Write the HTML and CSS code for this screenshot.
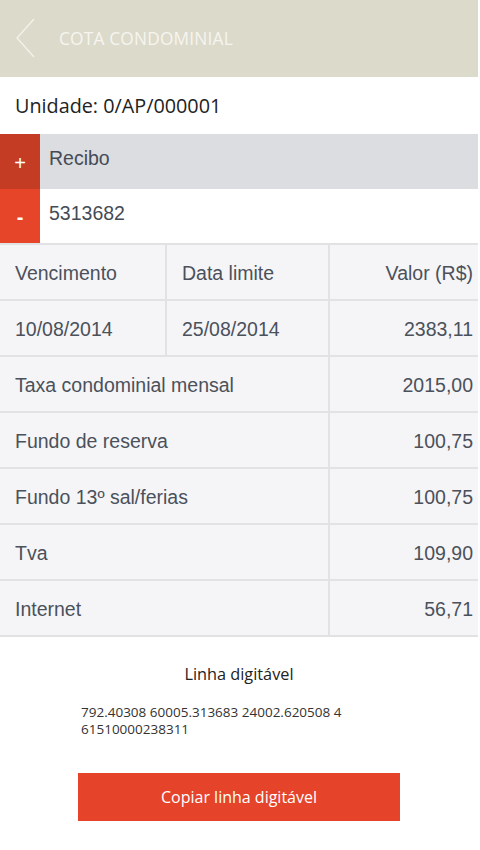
FILE: index.html
```html
<!DOCTYPE html>
<html lang="pt">
<head>
    <meta charset="UTF-8">
    <meta name="viewport" content="width=device-width, initial-scale=1.0">
    <title>Cota condominial</title>
    <link rel="stylesheet" href="styles.css">
</head>
<body>

    <header class="topbar">
        <a class="back" href="#">
            <svg width="22" height="42" viewBox="0 0 22 42">
                <polyline points="19,2 2,21 19,40" fill="none" stroke="#f3f2ea" stroke-width="1.4"/>
            </svg>
        </a>
        <h1>COTA CONDOMINIAL</h1>
    </header>

    <div class="unidade">Unidade: 0/AP/000001</div>

    <div class="recibo">
        <div class="recibo-row head">
            <span class="toggle plus">+</span>
            <span class="label">Recibo</span>
        </div>
        <div class="recibo-row">
            <span class="toggle minus">-</span>
            <span class="label">5313682</span>
        </div>
    </div>

    <div class="tabela">
        <div class="cell">Vencimento</div>
        <div class="cell">Data limite</div>
        <div class="cell num">Valor (R$)</div>

        <div class="cell">10/08/2014</div>
        <div class="cell">25/08/2014</div>
        <div class="cell num">2383,11</div>

        <div class="cell wide">Taxa condominial mensal</div>
        <div class="cell num">2015,00</div>

        <div class="cell wide">Fundo de reserva</div>
        <div class="cell num">100,75</div>

        <div class="cell wide">Fundo 13º sal/ferias</div>
        <div class="cell num">100,75</div>

        <div class="cell wide">Tva</div>
        <div class="cell num">109,90</div>

        <div class="cell wide">Internet</div>
        <div class="cell num">56,71</div>
    </div>

    <div class="linha">
        <h2>Linha digitável</h2>
        <p class="codigo">792.40308 60005.313683 24002.620508 4<br>61510000238311</p>
        <button class="copiar">Copiar linha digitável</button>
    </div>

</body>
</html>
```

FILE: styles.css
```css
body {
    margin: 0;
    padding: 0;
    width: 478px;
    background-color: white;
    font-family: "Liberation Sans", Arial, sans-serif;
}
.topbar {
    height: 77px;
    background-color: #dcdacb;
    display: flex;
    align-items: center;
}
.back {
    display: flex;
    margin-left: 15px;
    margin-top: -1px;
}
.topbar h1 {
    margin: 0 0 0 22px;
    font-family: "Open Sans", sans-serif;
    font-weight: normal;
    font-size: 17.3px;
    color: #f6f5ef;
    letter-spacing: 0.2px;
}
.unidade {
    height: 57px;
    display: flex;
    align-items: center;
    padding-left: 15px;
    font-family: "Open Sans", sans-serif;
    font-size: 19.8px;
    color: #222;
}
.recibo-row {
    display: flex;
    height: 54px;
    background-color: white;
}
.recibo-row.head {
    height: 55px;
    background-color: #dcdde0;
}
.toggle {
    width: 40px;
    display: flex;
    align-items: center;
    justify-content: center;
    color: white;
    font-size: 20px;
    padding-top: 3px;
}
.toggle.plus {
    background-color: #c33c23;
}
.toggle.minus {
    background-color: #e6452a;
    font-weight: bold;
}
.label {
    padding-left: 9px;
    padding-top: 13px;
    font-size: 19.5px;
    color: #454b55;
}
.tabela {
    display: grid;
    grid-template-columns: 165px 161px 1fr;
    grid-auto-rows: 54px;
    gap: 2px;
    padding: 2px 0;
    background-color: #e2e2e4;
}
.cell {
    background-color: #f5f5f7;
    display: flex;
    align-items: center;
    padding: 2px 15px 0;
    font-size: 19.5px;
    color: #4b515b;
}
.cell.wide {
    grid-column: span 2;
}
.cell.num {
    justify-content: flex-end;
    padding-right: 5px;
}
.linha {
    display: flex;
    flex-direction: column;
    align-items: center;
}
.linha h2 {
    margin: 26px 0 0 0;
    font-family: "Open Sans", sans-serif;
    font-weight: normal;
    font-size: 16.3px;
    color: #222;
}
.codigo {
    align-self: flex-start;
    margin: 19px 0 0 81px;
    font-family: "Open Sans", sans-serif;
    font-size: 13.5px;
    line-height: 17px;
    color: #333;
}
.copiar {
    margin-top: 35px;
    width: 322px;
    height: 48px;
    border: none;
    background-color: #e5432a;
    color: white;
    font-family: "Open Sans", sans-serif;
    font-size: 16px;
    cursor: pointer;
}
```
